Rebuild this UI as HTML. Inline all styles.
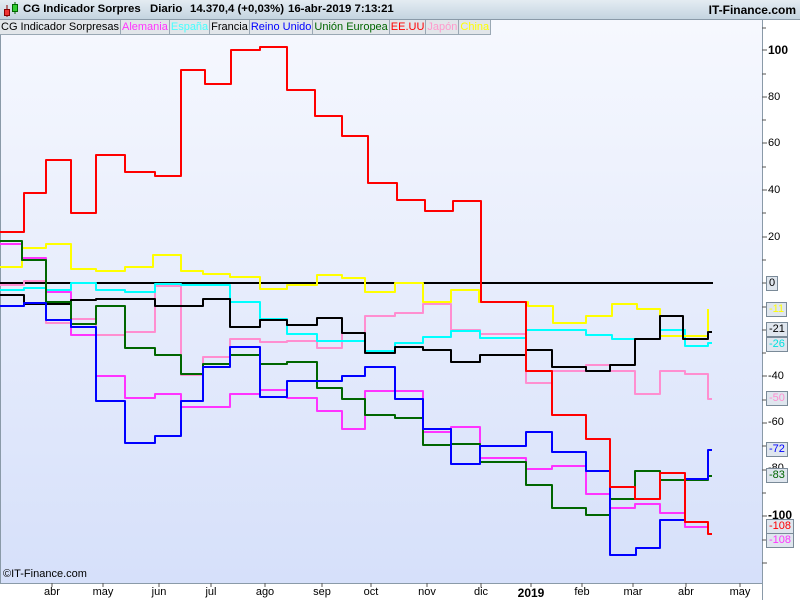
<!DOCTYPE html>
<html><head><meta charset="utf-8"><style>
*{margin:0;padding:0;box-sizing:border-box}
body{width:800px;height:600px;overflow:hidden;background:#fff;font-family:"Liberation Sans",sans-serif;position:relative}
#hdr{position:absolute;left:0;top:0;width:800px;height:20px;background:linear-gradient(#e4ecf2,#c4d4e0);border-bottom:1px solid #8a9aa8}
#hdr .t{position:absolute;top:3px;font-weight:bold;font-size:11.4px;color:#000;white-space:pre}
#hdr .r{position:absolute;right:4px;top:3px;font-weight:bold;font-size:12px}
#plot{position:absolute;left:0;top:20px;width:762px;height:563px;background:linear-gradient(#f6f8fe,#d6e0fa);border-left:1px solid #8a9aa8}
#leg{position:absolute;left:0;top:20px;height:15px;display:flex;font-size:11px}
#leg span{display:block;height:15px;line-height:14px;padding:0 1px 0 1px;background:#e2e6ea;border-right:1px solid #9aa8b4;border-bottom:1px solid #9aa8b4}
#ax{position:absolute;left:762px;top:20px;width:38px;height:580px;border-left:1px solid #8a9aa8;background:#fff}
.yl{position:absolute;left:768px;font-size:11px;line-height:12px}
.bx{position:absolute;left:766px;font-size:11px;line-height:13px;height:15px;padding:0 2px;background:#dfe6ee;border:1px solid #7a8a98}
#bot{position:absolute;left:0;top:583px;width:762px;height:17px;border-top:1px solid #8a9aa8;background:#fff}
.xl{position:absolute;top:586px;font-size:11px;transform:translateX(-50%)}
</style></head><body>
<div id="hdr">
<svg style="position:absolute;left:3px;top:2px" width="16" height="16"><line x1="4" y1="3" x2="4" y2="15" stroke="#800"/><rect x="1.5" y="7.5" width="5" height="6" fill="#e33" stroke="#800"/><line x1="12" y1="0" x2="12" y2="12" stroke="#060"/><rect x="9.5" y="2.5" width="5" height="7" fill="#3c3" stroke="#060"/></svg>
<div class="t" style="left:23px">CG Indicador Sorpres</div>
<div class="t" style="left:150px">Diario</div>
<div class="t" style="left:190px">14.370,4 (+0,03%)</div>
<div class="t" style="left:288px">16-abr-2019 7:13:21</div>
<div class="r">IT-Finance.com</div>
</div>
<div id="plot"></div>
<div id="leg"><span>CG Indicador Sorpresas</span><span style="color:#ff33ff">Alemania</span><span style="color:#44ffff">España</span><span>Francia</span><span style="color:#0000ff">Reino Unido</span><span style="color:#006600">Unión Europea</span><span style="color:#ff0000">EE.UU</span><span style="color:#ff99cc">Japón</span><span style="color:#ffff00">China</span></div>
<svg style="position:absolute;left:0;top:0" width="762" height="583" fill="none" stroke-width="2" stroke-linejoin="round">
<path d="M0 283H713" stroke="#000"/>
<path stroke="#ff8ed0" d="M0 285H24V281H46V323H71V319H96V335H125V332H155V286H181V375H203V357H230V339H260V342H287V341H317V348H342V333H365V316H395V313H423V304H451V330H480V334H526V383H552V371H586V365H610V371H635V394H660V371H685V374H708V399H712"/>
<path stroke="#ff33ff" d="M0 244H22V258H46V292H71V335H96V376H125V398H155V394H181V407H230V394H260V390H287V398H317V411H342V429H365V391H423V432H451V427H480V458H526V469H552V466H586V494H610V508H635V504H660V513H685V527H708"/>
<path stroke="#00ffff" d="M0 290H24V288H46V290H71V283H96V290H125V292H155V284H181V285H230V302H260V319H287V334H317V341H365V351H395V343H423V337H451V331H480V338H526V330H586V335H612V339H660V330H685V346H708V343H712"/>
<path stroke="#ffff00" d="M0 267H22V248H46V244H71V269H96V271H125V267H153V255H181V271H203V274H230V277H260V289H287V285H317V275H342V278H365V292H395V283H423V302H451V290H479V302H528V306H553V323H586V316H612V304H637V309H660V336H708V309"/>
<path stroke="#000" d="M0 295H24V304H71V300H96V299H155V306H203V299H230V327H260V320H287V325H317V318H342V333H365V353H395V347H423V350H451V362H480V355H526V350H552V367H586V371H610V365H635V339H660V316H683V339H708V332H712"/>
<path stroke="#006600" d="M0 241H22V260H46V302H71V324H96V306H125V348H155V355H181V374H203V364H230V355H260V364H287V362H317V388H342V399H365V415H395V418H423V445H451V444H480V462H526V485H552V508H586V515H610V499H635V471H660V480H708V476H712"/>
<path stroke="#0000ff" d="M0 306H24V303H46V320H71V327H96V401H125V443H155V436H181V401H203V367H230V347H260V397H287V381H342V376H365V367H395V399H423V429H451V464H480V446H526V432H552V452H586V471H610V555H636V548H660V520H685V479H708V450H712"/>
<path stroke="#ff0000" d="M0 232H24V193H46V160H71V213H96V155H125V172H155V176H181V70H205V84H231V50H260V47H287V90H315V116H342V136H368V183H397V200H425V211H453V201H481V302H526V371H552V415H586V439H610V487H635V499H660V473H685V522H708V534H712"/>
</svg>
<div style="position:absolute;left:3px;top:568px;font-size:11px">©IT-Finance.com</div>
<div id="ax"></div>
<svg style="position:absolute;left:762px;top:20px" width="8" height="563" stroke="#555"><path d="M0 8H4M0 30H5M0 54H4M0 77H5M0 100H4M0 123H5M0 147H4M0 170H5M0 193H4M0 217H5M0 240H4M0 263H5M0 287H4M0 310H5M0 333H4M0 356H5M0 380H4M0 403H5M0 426H4M0 450H5M0 473H4M0 496H5M0 520H4M0 543H5"/></svg>
<div class="yl" style="top:44px;font-weight:bold;font-size:12px">100</div>
<div class="yl" style="top:91px">80</div>
<div class="yl" style="top:137px">60</div>
<div class="yl" style="top:184px">40</div>
<div class="yl" style="top:231px">20</div>
<div class="bx" style="top:276px">0</div>
<div class="bx" style="top:302px;color:#ffff00">-11</div>
<div class="bx" style="top:322px">-21</div>
<div class="bx" style="top:337px;color:#00e0e0">-26</div>
<div class="yl" style="top:370px">-40</div>
<div class="bx" style="top:391px;color:#ff8ed0">-50</div>
<div class="yl" style="top:416px">-60</div>
<div class="bx" style="top:442px;color:#0000ff">-72</div>
<div class="yl" style="top:462px">-80</div>
<div class="bx" style="top:468px;color:#006600">-83</div>
<div class="yl" style="top:509px;font-weight:bold;font-size:12px">-100</div>
<div class="bx" style="top:519px;color:#ff0000">-108</div>
<div class="bx" style="top:533px;color:#ff33ff">-108</div>
<div id="bot"></div>
<svg style="position:absolute;left:0;top:583px" width="762" height="6" stroke="#555"><path d="M52 0V4M103 0V4M159 0V4M211 0V4M265 0V4M322 0V4M371 0V4M427 0V4M481 0V4M531 0V4M582 0V4M633 0V4M686 0V4M740 0V4"/></svg>
<div class="xl" style="left:52px">abr</div>
<div class="xl" style="left:103px">may</div>
<div class="xl" style="left:159px">jun</div>
<div class="xl" style="left:211px">jul</div>
<div class="xl" style="left:265px">ago</div>
<div class="xl" style="left:322px">sep</div>
<div class="xl" style="left:371px">oct</div>
<div class="xl" style="left:427px">nov</div>
<div class="xl" style="left:481px">dic</div>
<div class="xl" style="left:531px;font-weight:bold;font-size:12px">2019</div>
<div class="xl" style="left:582px">feb</div>
<div class="xl" style="left:633px">mar</div>
<div class="xl" style="left:686px">abr</div>
<div class="xl" style="left:740px">may</div>
</body></html>
